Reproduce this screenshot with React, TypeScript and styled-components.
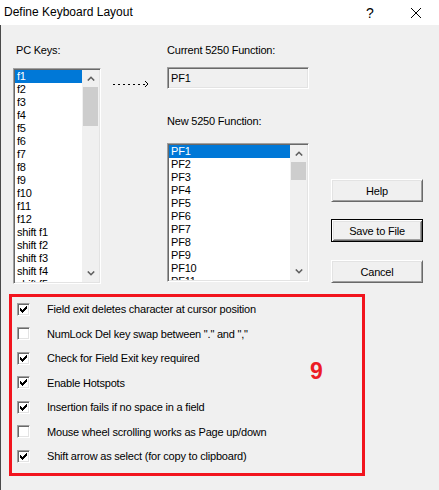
import React from 'react';
import styled, { createGlobalStyle } from 'styled-components';

const Global = createGlobalStyle`
  html, body { margin: 0; padding: 0; background: #f0f0f0; }
  body { font-family: "Liberation Sans", Arial, sans-serif; color: #000; }
`;

const Window = styled.div`
  width: 439px;
  height: 490px;
  display: flex;
  flex-direction: column;
  background: #f0f0f0;
  overflow: hidden;
`;

const TitleBar = styled.div`
  height: 25px;
  flex: none;
  background: #ffffff;
  display: flex;
  align-items: center;
  padding-left: 4px;
  font-size: 12px;
`;

const Title = styled.div`
  flex: 1;
  line-height: 25px;
`;

const TitleButton = styled.div`
  width: 46px;
  height: 25px;
  display: flex;
  align-items: center;
  justify-content: center;
  font-size: 14px;
`;

const Body = styled.div`
  flex: 1;
  display: flex;
  flex-direction: column;
  border-left: 1px solid #4a4a4a;
  padding-top: 19px;
  font-size: 11px;
  letter-spacing: -0.2px;
`;

const TopArea = styled.div`
  display: flex;
  padding-left: 12px;
`;

const Column = styled.div<{ $w: number; $pl?: number }>`
  width: ${(p) => p.$w}px;
  padding-left: ${(p) => p.$pl ?? 0}px;
  box-sizing: border-box;
  flex: none;
  display: flex;
  flex-direction: column;
`;

const Label = styled.div<{ $mt?: number; $ml?: number }>`
  height: 13px;
  line-height: 13px;
  margin-top: ${(p) => p.$mt ?? 0}px;
  margin-left: ${(p) => p.$ml ?? 0}px;
  white-space: nowrap;
`;

const Sunken = styled.div`
  border-style: solid;
  border-width: 1px;
  border-color: #a0a0a0 #ffffff #ffffff #a0a0a0;
  box-shadow: inset 1px 1px 0 #696969, inset -1px -1px 0 #e3e3e3;
  box-sizing: border-box;
`;

const ListBox = styled(Sunken)<{ $h: number; $mt: number }>`
  height: ${(p) => p.$h}px;
  margin-top: ${(p) => p.$mt}px;
  padding: 1px;
  display: flex;
  background: #ffffff;
`;

const Items = styled.div`
  flex: 1;
  overflow: hidden;
  background: #fff;
`;

const Item = styled.div<{ $sel?: boolean }>`
  height: 13px;
  line-height: 13px;
  padding-left: 2px;
  white-space: nowrap;
  background: ${(p) => (p.$sel ? '#0078d7' : 'transparent')};
  color: ${(p) => (p.$sel ? '#ffffff' : '#000000')};
`;

const ScrollBar = styled.div`
  width: 17px;
  flex: none;
  background: #f0f0f0;
  display: flex;
  flex-direction: column;
`;

const ScrollBtn = styled.div`
  height: 17px;
  flex: none;
  display: flex;
  align-items: center;
  justify-content: center;
`;

const Track = styled.div`
  flex: 1;
`;

const Thumb = styled.div<{ $h: number }>`
  height: ${(p) => p.$h}px;
  margin: 0 1px;
  background: #cdcdcd;
`;

const TextBox = styled(Sunken)`
  height: 22px;
  margin-top: 10px;
  background: #f0f0f0;
  padding-left: 3px;
  line-height: 20px;
`;

const ArrowWrap = styled.div`
  margin: 34px 0 0 12px;
  height: 8px;
`;

const Button = styled.div<{ $default?: boolean; $mt: number }>`
  height: 23px;
  margin-top: ${(p) => p.$mt}px;
  box-sizing: border-box;
  display: flex;
  align-items: center;
  justify-content: center;
  background: #f0f0f0;
  border-style: solid;
  border-width: 1px;
  border-color: ${(p) => (p.$default ? '#000 #000 #000 #000' : '#ffffff #696969 #696969 #ffffff')};
  box-shadow: ${(p) =>
    p.$default
      ? 'inset 1px 1px 0 #ffffff, inset -1px -1px 0 #696969, inset 2px 2px 0 #e3e3e3, inset -2px -2px 0 #a0a0a0'
      : 'inset 1px 1px 0 #e3e3e3, inset -1px -1px 0 #a0a0a0'};
`;

const Options = styled.div`
  position: relative;
  margin: 10px 0 0 8px;
  width: 356px;
  height: 182px;
  box-sizing: border-box;
  border: 3px solid #f2141e;
  padding: 0 0 0 5px;
  display: flex;
  flex-direction: column;
`;

const OptionRow = styled.div`
  height: 24.5px;
  flex: none;
  display: flex;
  align-items: center;
`;

const Check = styled.div`
  width: 13px;
  height: 13px;
  flex: none;
  box-sizing: border-box;
  background: #ffffff;
  border-style: solid;
  border-width: 1px;
  border-color: #a0a0a0 #ffffff #ffffff #a0a0a0;
  box-shadow: inset 1px 1px 0 #696969, inset -1px -1px 0 #e3e3e3;
  display: flex;
  align-items: center;
  justify-content: center;
`;

const OptionText = styled.span`
  margin-left: 17px;
  white-space: nowrap;
`;

const Badge = styled.div`
  position: absolute;
  left: 298px;
  top: 63px;
  font-size: 23px;
  line-height: 23px;
  font-weight: bold;
  letter-spacing: 0;
  color: #ec1c24;
`;

const Chevron = ({ up }: { up?: boolean }) => (
  <svg width="8" height="5" viewBox="0 0 8 5">
    <polyline
      points={up ? '0.8,4.5 4,1.3 7.2,4.5' : '0.8,0.5 4,3.7 7.2,0.5'}
      fill="none"
      stroke="#606060"
      strokeWidth="1.6"
    />
  </svg>
);

const CheckMark = () => (
  <svg width="7" height="7" viewBox="0 0 7 7" shapeRendering="crispEdges">
    <rect x="6" y="0" width="1" height="1" fill="#000" />
    <rect x="5" y="1" width="2" height="1" fill="#000" />
    <rect x="0" y="2" width="1" height="1" fill="#000" />
    <rect x="4" y="2" width="3" height="1" fill="#000" />
    <rect x="0" y="3" width="2" height="1" fill="#000" />
    <rect x="3" y="3" width="3" height="1" fill="#000" />
    <rect x="0" y="4" width="5" height="1" fill="#000" />
    <rect x="1" y="5" width="3" height="1" fill="#000" />
    <rect x="2" y="6" width="1" height="1" fill="#000" />
  </svg>
);

const DottedArrow = () => (
  <svg width="40" height="8" viewBox="0 0 40 8" shapeRendering="crispEdges">
    {[0, 5, 10, 15, 20, 25, 30].map((x) => (
      <rect key={x} x={x} y="4" width="2" height="1" fill="#000" />
    ))}
    <polyline points="32,1 35,4 32,7" fill="none" stroke="#000" strokeWidth="1" shapeRendering="auto" />
  </svg>
);

const CloseIcon = () => (
  <svg width="10" height="10" viewBox="0 0 10 10">
    <line x1="0" y1="0" x2="10" y2="10" stroke="#000" strokeWidth="1" />
    <line x1="10" y1="0" x2="0" y2="10" stroke="#000" strokeWidth="1" />
  </svg>
);

const pcKeys = [
  'f1', 'f2', 'f3', 'f4', 'f5', 'f6', 'f7', 'f8', 'f9', 'f10', 'f11', 'f12',
  'shift f1', 'shift f2', 'shift f3', 'shift f4', 'shift f5',
];
const functions = Array.from({ length: 11 }, (_, i) => `PF${i + 1}`);

const options: [string, boolean][] = [
  ['Field exit deletes character at cursor position', true],
  ['NumLock Del key swap between "." and ","', false],
  ['Check for Field Exit key required', true],
  ['Enable Hotspots', true],
  ['Insertion fails if no space in a field', true],
  ['Mouse wheel scrolling works as Page up/down', false],
  ['Shift arrow as select (for copy to clipboard)', true],
];

const List = ({ items, h, mt, thumbH }: { items: string[]; h: number; mt: number; thumbH: number }) => (
  <ListBox $h={h} $mt={mt}>
    <Items>
      {items.map((it, i) => (
        <Item key={it} $sel={i === 0}>
          {it}
        </Item>
      ))}
    </Items>
    <ScrollBar>
      <ScrollBtn>
        <Chevron up />
      </ScrollBtn>
      <Track>
        <Thumb $h={thumbH} />
      </Track>
      <ScrollBtn>
        <Chevron />
      </ScrollBtn>
    </ScrollBar>
  </ListBox>
);

export default function App() {
  return (
    <>
      <Global />
      <Window>
        <TitleBar>
          <Title>Define Keyboard Layout</Title>
          <TitleButton>?</TitleButton>
          <TitleButton>
            <CloseIcon />
          </TitleButton>
        </TitleBar>
        <Body>
          <TopArea>
            <Column $w={88}>
              <Label $ml={3}>PC Keys:</Label>
              <List items={pcKeys} h={216} mt={11} thumbH={39} />
            </Column>
            <Column $w={66}>
              <ArrowWrap>
                <DottedArrow />
              </ArrowWrap>
            </Column>
            <Column $w={142}>
              <Label>Current 5250 Function:</Label>
              <TextBox>PF1</TextBox>
              <Label $mt={26}>New 5250 Function:</Label>
              <List items={functions} h={139} mt={15} thumbH={18} />
            </Column>
            <Column $w={114} $pl={22}>
              <Button $mt={135}>Help</Button>
              <Button $mt={17} $default>
                Save to File
              </Button>
              <Button $mt={18}>Cancel</Button>
            </Column>
          </TopArea>
          <Options>
            {options.map(([text, checked]) => (
              <OptionRow key={text}>
                <Check>{checked && <CheckMark />}</Check>
                <OptionText>{text}</OptionText>
              </OptionRow>
            ))}
            <Badge>9</Badge>
          </Options>
        </Body>
      </Window>
    </>
  );
}
